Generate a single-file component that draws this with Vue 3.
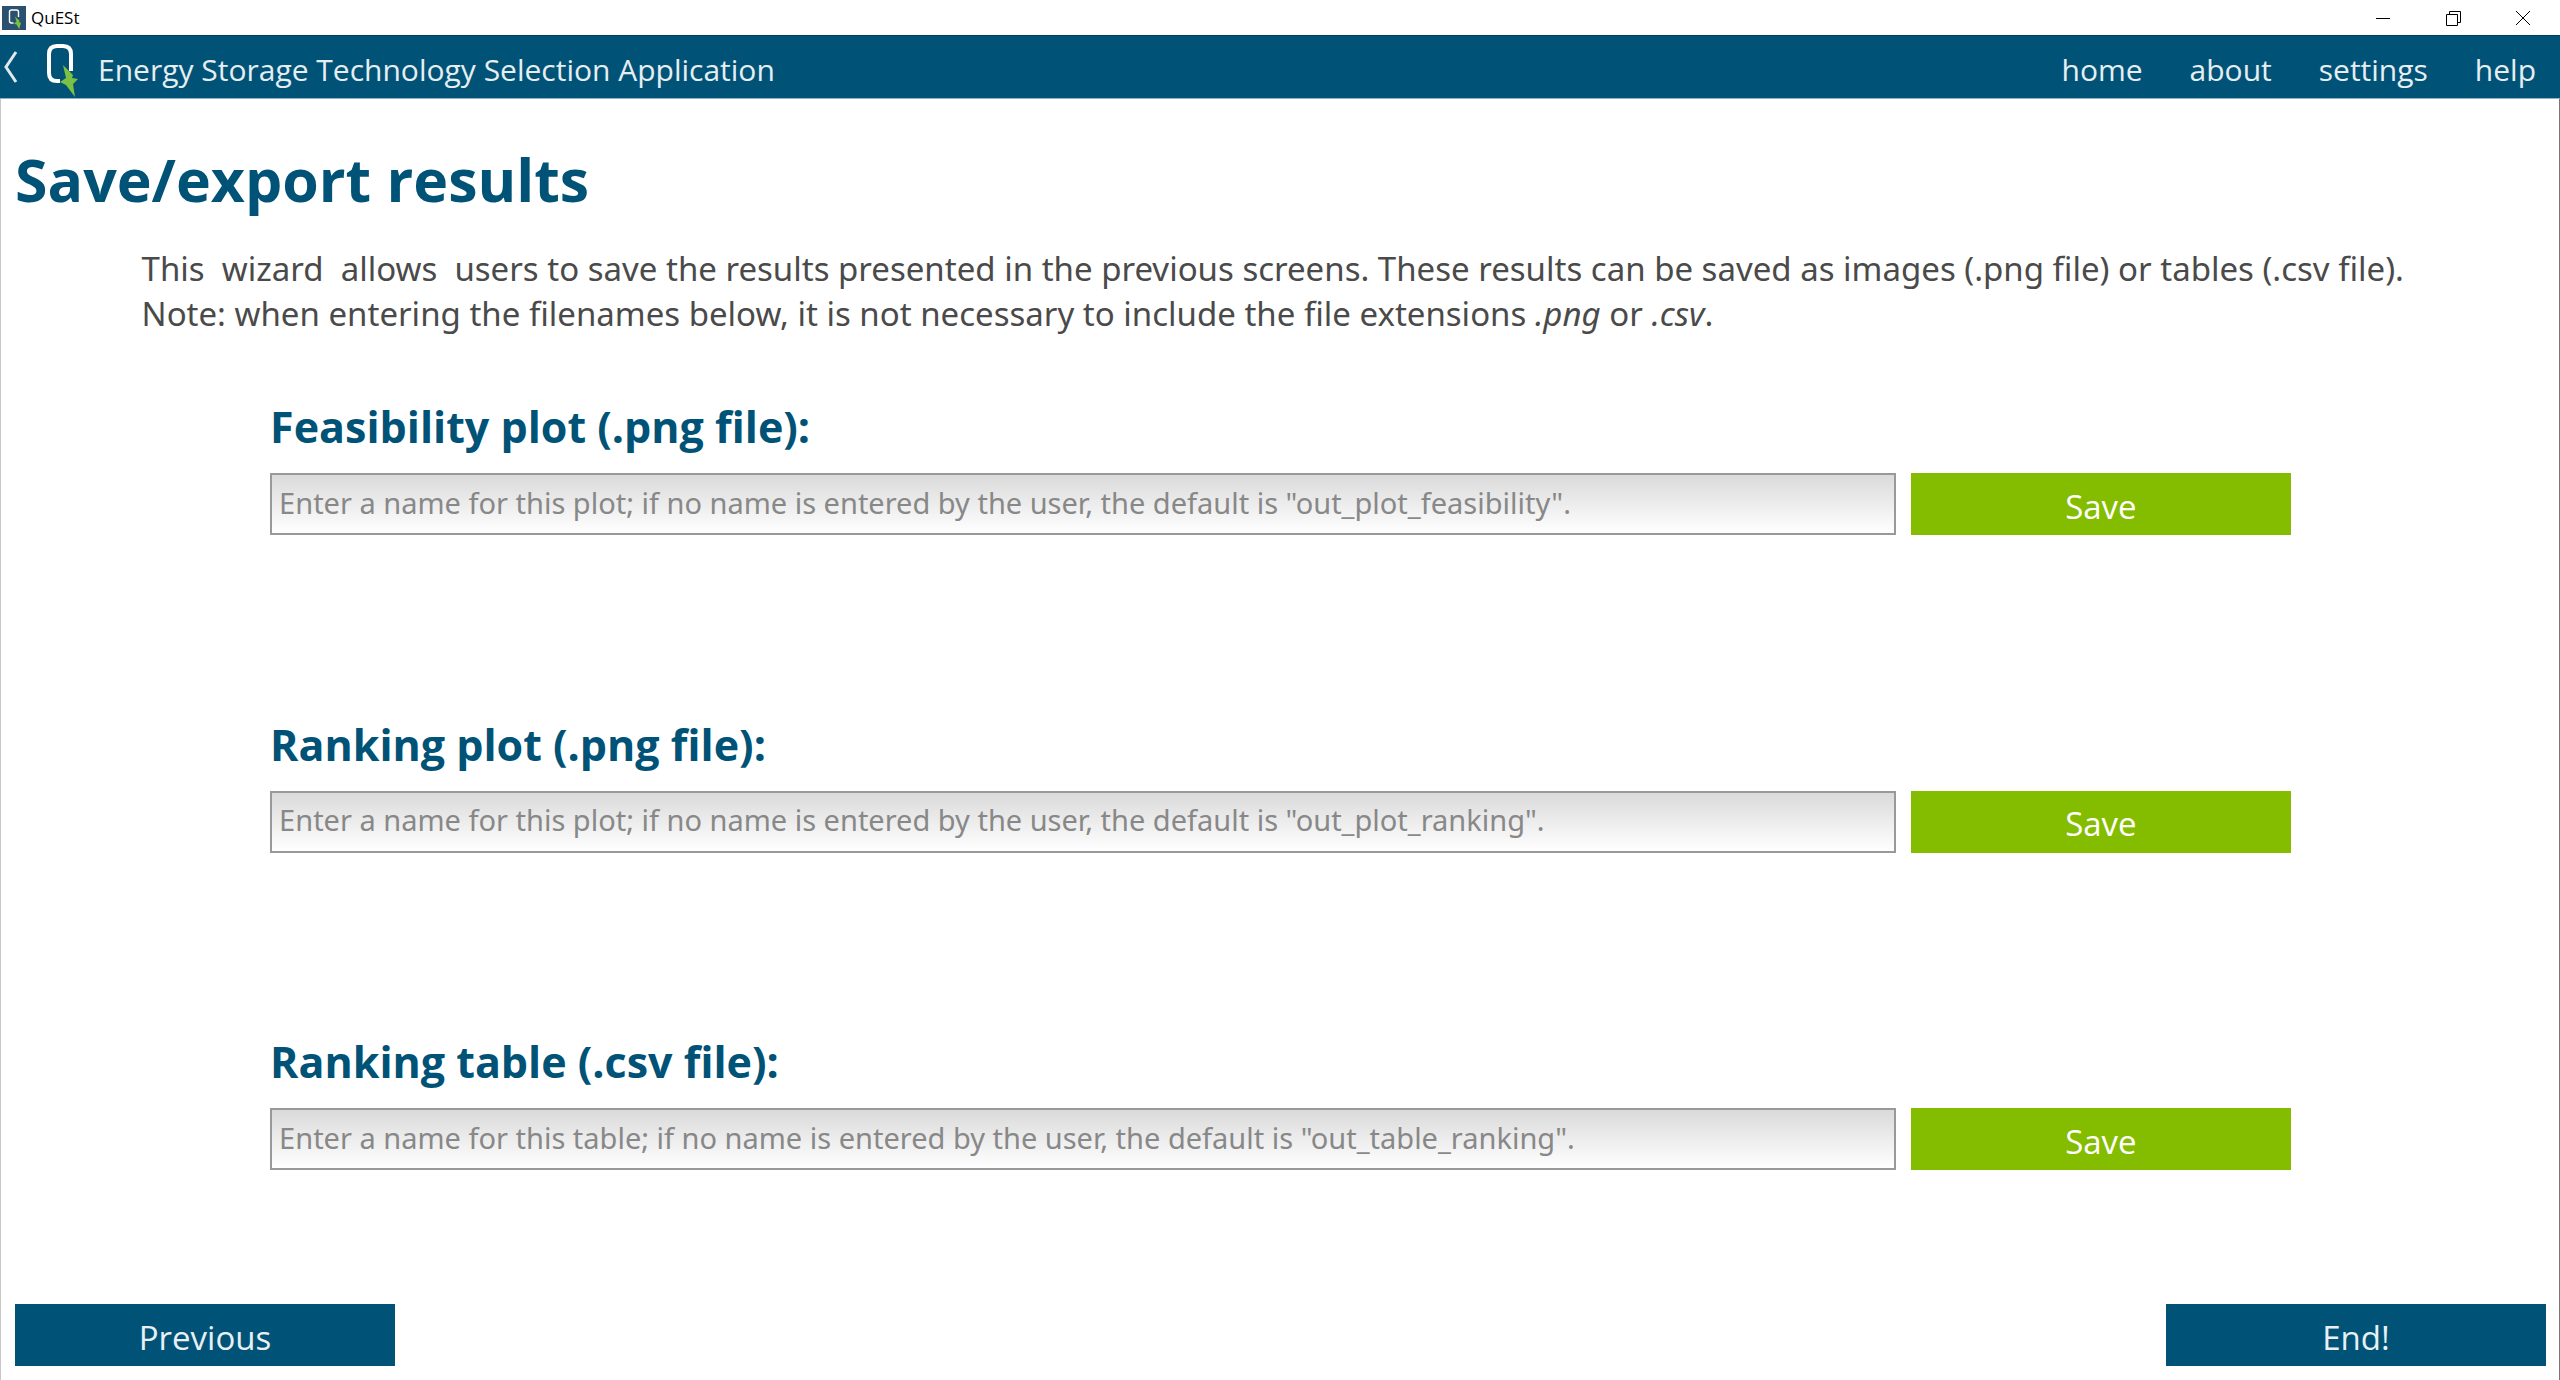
<script setup>
import { reactive } from 'vue'

const links = ['home', 'about', 'settings', 'help']

const exports = reactive([
  { id: 'feasibility', label: 'Feasibility plot (.png file):', kind: 'plot', fallback: 'out_plot_feasibility', name: '' },
  { id: 'ranking', label: 'Ranking plot (.png file):', kind: 'plot', fallback: 'out_plot_ranking', name: '' },
  { id: 'table', label: 'Ranking table (.csv file):', kind: 'table', fallback: 'out_table_ranking', name: '' },
])

const hint = (e) =>
  `Enter a name for this ${e.kind}; if no name is entered by the user, the default is "${e.fallback}".`
</script>

<template>
  <div class="window">
    <div class="titlebar">
      <svg class="app-icon" viewBox="0 0 24 24" aria-hidden="true">
        <rect width="24" height="24" fill="#2a5270" />
        <path d="M11.500 17H9.500Q7.500 17 7.500 15V6Q7.500 4 9.500 4H14.500Q16.500 4 16.500 6V11" fill="none" stroke="#fff" stroke-width="1.400" />
        <path d="M13 10.500L17.600 14.800L17 16.200L19 16.800L17.200 23L14.500 18.500L12 17.800L14.500 15.500Z" fill="#7bc143" />
      </svg>
      <span class="app-name">QuESt</span>
      <div class="controls">
        <button type="button" aria-label="Minimize">
          <svg viewBox="0 0 16 16"><path d="M1 8.500H15" /></svg>
        </button>
        <button type="button" aria-label="Restore">
          <svg viewBox="0 0 16 16"><path d="M1.500 4.500H12.500V15.500H1.500ZM4.500 4.500V1.500H15.500V12.500H12.500" /></svg>
        </button>
        <button type="button" aria-label="Close">
          <svg viewBox="0 0 16 16"><path d="M1 1L15 15M15 1L1 15" /></svg>
        </button>
      </div>
    </div>

    <header class="navbar">
      <button type="button" class="back" aria-label="Back">
        <svg viewBox="0 0 14 32"><path d="M12 1L2 16L12 31" fill="none" stroke="#dfe9ee" stroke-width="3" /></svg>
      </button>
      <svg class="logo" viewBox="0 0 32 60" aria-hidden="true">
        <path d="M14 44H11Q3 44 3 36V17Q3 9 11 9H17Q25 9 25 17V34" fill="none" stroke="#fff" stroke-width="4" />
        <path d="M17 28L27 38L26 41L32 42L27 47L29 60L20 48L14 45L20 41Z" fill="#7bc143" />
      </svg>
      <span class="product">Energy Storage Technology Selection Application</span>
      <nav class="links">
        <a v-for="l in links" :key="l" href="#">{{ l }}</a>
      </nav>
    </header>

    <main class="page">
      <h1>Save/export results</h1>
      <p class="intro">This&nbsp; wizard&nbsp; allows&nbsp; users to save the results presented in the previous screens. These results can be saved as images (.png file) or tables (.csv file).<br />Note: when entering the filenames below, it is not necessary to include the file extensions <i>.png</i> or <i>.csv</i>.</p>

      <form class="exports" @submit.prevent>
        <div v-for="e in exports" :key="e.id" class="export">
          <label :for="e.id">{{ e.label }}</label>
          <div class="row">
            <input :id="e.id" v-model="e.name" type="text" :placeholder="hint(e)" />
            <button type="button" class="btn save">Save</button>
          </div>
        </div>
      </form>

      <footer class="steps">
        <button type="button" class="btn">Previous</button>
        <button type="button" class="btn">End!</button>
      </footer>
    </main>
  </div>
</template>

<style>
body {
  margin: 0;
  background: #fff;
}
</style>

<style scoped>
.window {
  display: flex;
  flex-direction: column;
  min-height: 100vh;
  font-family: "Open Sans", "Noto Sans", sans-serif;
}

.window * {
  box-sizing: border-box;
}

button {
  border: 0;
  padding: 0;
  background: none;
  font-family: inherit;
}

.titlebar {
  display: flex;
  align-items: center;
  height: 35px;
  padding: 0 2px;
}

.app-icon {
  width: 24px;
  height: 24px;
}

.app-name {
  margin-left: 5px;
  font-size: 17px;
  color: #000;
}

.controls {
  display: flex;
  margin-left: auto;
}

.controls button {
  display: grid;
  place-items: center;
  width: 70px;
  height: 34px;
}

.controls svg {
  width: 16px;
  height: 16px;
  fill: none;
  stroke: #000;
  stroke-width: 1;
}

.navbar {
  display: flex;
  align-items: center;
  height: 64px;
  padding-right: 24px;
  background: #005377;
  border-top: 1px solid #003f5c;
  border-bottom: 1px solid #8fb3c3;
  font-size: 30px;
  color: #e6eef2;
}

.back {
  margin-left: 4px;
}

.back svg {
  display: block;
  width: 14px;
  height: 32px;
}

.logo {
  width: 32px;
  height: 60px;
  margin-left: 28px;
}

.product {
  margin-left: 20px;
  padding-top: 4px;
}

.links {
  display: flex;
  gap: 47px;
  margin-left: auto;
  padding-top: 4px;
}

.links a {
  color: inherit;
  text-decoration: none;
}

.page {
  display: flex;
  flex: 1;
  flex-direction: column;
  padding: 48px 13px 14px 14px;
  border-left: 1px solid #c8c8c8;
  border-right: 1px solid #777;
}

h1 {
  margin: 0;
  font-size: 59px;
  line-height: 64px;
  color: #005377;
}

.intro {
  margin: 35px 0 0;
  padding-left: 5%;
  font: 33px/45px "Noto Sans", sans-serif;
  color: #4a4a4a;
}

.exports {
  display: flex;
  flex: 1;
  flex-direction: column;
  justify-content: space-between;
  margin-top: 65px;
  padding: 0 10%;
}

.export {
  padding: 0 2px;
}

label {
  display: block;
  height: 72px;
  font-size: 43px;
  line-height: 52px;
  font-weight: 700;
  color: #005377;
}

.row {
  display: flex;
  gap: 15px;
}

input {
  flex: 1;
  min-width: 0;
  height: 62px;
  padding: 0 7px 4px;
  border: 2px solid #999;
  border-radius: 0;
  background: linear-gradient(#dadada, #fff);
  font-family: "Noto Sans", sans-serif;
  font-size: 29px;
  color: #333;
}

input::placeholder {
  color: #888;
  opacity: 1;
}

.btn {
  width: 380px;
  height: 62px;
  padding-top: 4px;
  background: #005377;
  font-size: 33px;
  color: #e9f0f4;
}

.save {
  background: #84bd00;
  color: #fff;
}

.steps {
  display: flex;
  justify-content: space-between;
  margin-top: 134px;
}
</style>
